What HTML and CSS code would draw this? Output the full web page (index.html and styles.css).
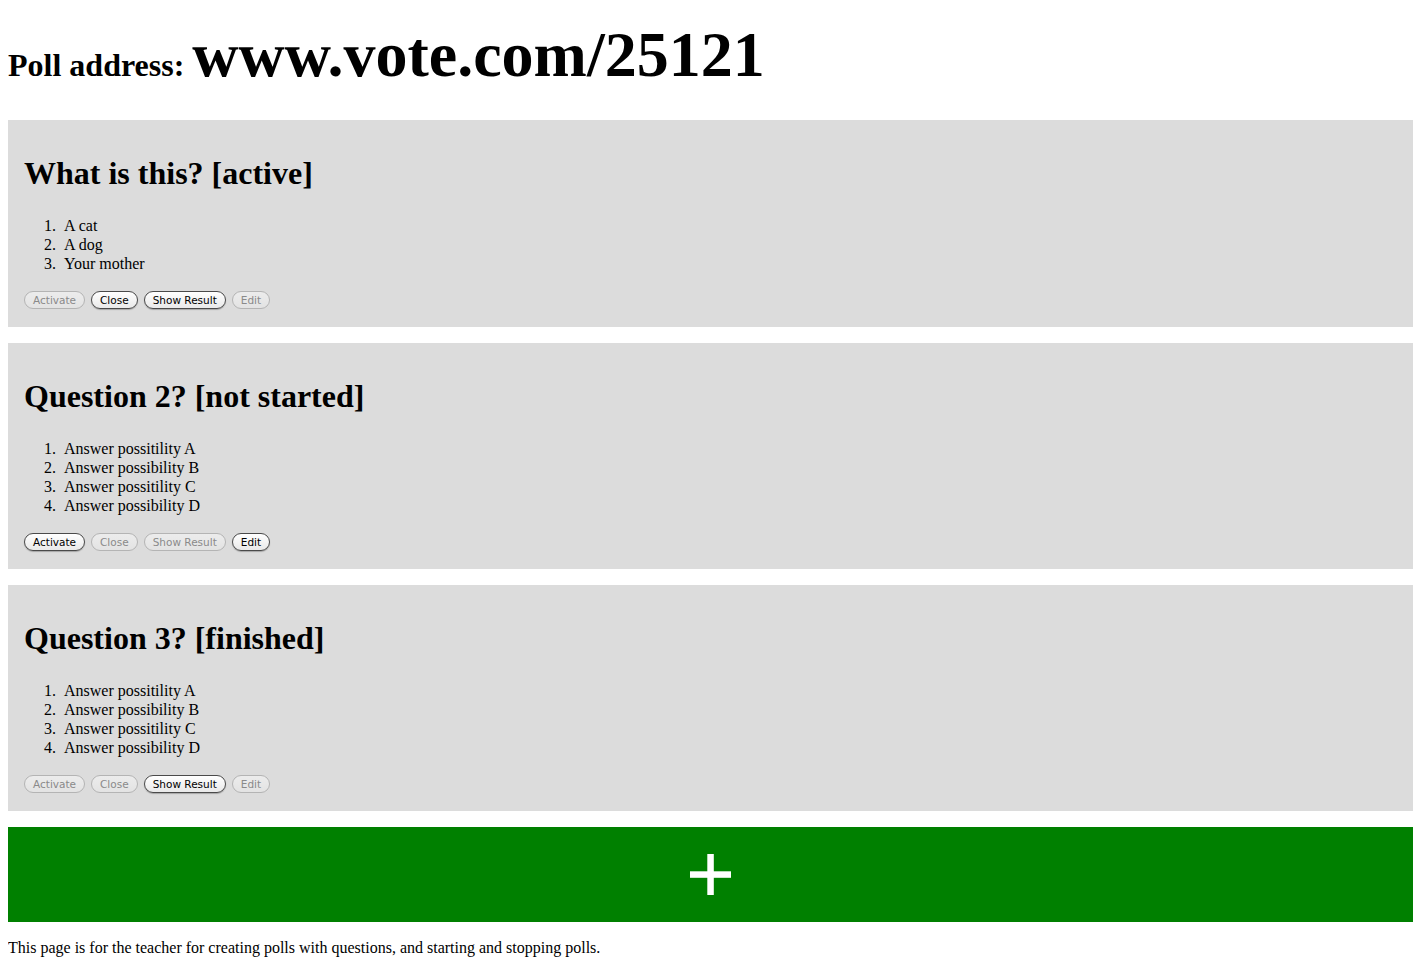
FILE: index.html
```
<!DOCTYPE html>
<html>
<head>
<meta charset="utf-8">
<title>Poll admin</title>
<link rel="stylesheet" href="styles.css">
</head>
<body>
<h1 class="address">Poll address: <span class="url">www.vote.com/25121</span></h1>

<div class="card">
  <h2 class="question">What is this? [active]</h2>
  <ol class="answers">
    <li>A cat</li>
    <li>A dog</li>
    <li>Your mother</li>
  </ol>
  <div class="actions">
    <button class="btn" disabled>Activate</button>
    <button class="btn">Close</button>
    <button class="btn">Show Result</button>
    <button class="btn" disabled>Edit</button>
  </div>
</div>

<div class="card">
  <h2 class="question">Question 2? [not started]</h2>
  <ol class="answers">
    <li>Answer possitility A</li>
    <li>Answer possibility B</li>
    <li>Answer possitility C</li>
    <li>Answer possibility D</li>
  </ol>
  <div class="actions">
    <button class="btn">Activate</button>
    <button class="btn" disabled>Close</button>
    <button class="btn" disabled>Show Result</button>
    <button class="btn">Edit</button>
  </div>
</div>

<div class="card">
  <h2 class="question">Question 3? [finished]</h2>
  <ol class="answers">
    <li>Answer possitility A</li>
    <li>Answer possibility B</li>
    <li>Answer possitility C</li>
    <li>Answer possibility D</li>
  </ol>
  <div class="actions">
    <button class="btn" disabled>Activate</button>
    <button class="btn" disabled>Close</button>
    <button class="btn">Show Result</button>
    <button class="btn" disabled>Edit</button>
  </div>
</div>

<div class="add" role="button" aria-label="Add question">
  <svg class="plus" width="41" height="41" viewBox="0 0 41 41" aria-hidden="true">
    <rect x="0" y="17.3" width="41" height="6.5" fill="#fff"/>
    <rect x="17.3" y="0" width="6.5" height="41" fill="#fff"/>
  </svg>
</div>

<p class="note">This page is for the teacher for creating polls with questions, and starting and stopping polls.</p>
</body>
</html>
```

FILE: styles.css
```
html, body {
  background: #fff;
}
body {
  margin: 8px;
  font-family: "Liberation Serif", "Times New Roman", serif;
  font-size: 16px;
  color: #000;
}
.address {
  font-size: 32px;
  font-weight: bold;
  line-height: 64px;
  margin: 15px 0 23px;
}
.url {
  font-size: 64px;
}
.card {
  background: #dcdcdc;
  padding: 16px 16px 18px;
  margin-bottom: 16px;
}
.question {
  font-size: 32px;
  font-weight: bold;
  line-height: 36px;
  margin: 19px 0 25px;
}
.answers {
  margin: 0;
  padding-left: 40px;
  line-height: 19px;
}
.answers li::marker {
  content: counter(list-item) ".\00a0\00a0";
}
.actions {
  margin-top: 18px;
  display: flex;
  gap: 6px;
}
.btn {
  font-family: "DejaVu Sans", Verdana, sans-serif;
  font-size: 10.5px;
  height: 18px;
  line-height: 16px;
  padding: 0 8px;
  border-radius: 9px;
  border: 1px solid #4a4a4a;
  background: linear-gradient(#ffffff, #f4f4f4 50%, #e9e9e9);
  color: #000;
  box-shadow: 0 1px 1px rgba(0,0,0,0.25);
}
.btn:disabled {
  border-color: #b4b4b4;
  background: linear-gradient(#ececec, #e3e3e3);
  color: #8a8a8a;
  box-shadow: none;
}
.add {
  background: #008000;
  height: 95px;
  display: flex;
  align-items: center;
  justify-content: center;
}
.plus {
  display: block;
}
.note {
  margin: 16px 0 0;
  line-height: 19px;
}
```
